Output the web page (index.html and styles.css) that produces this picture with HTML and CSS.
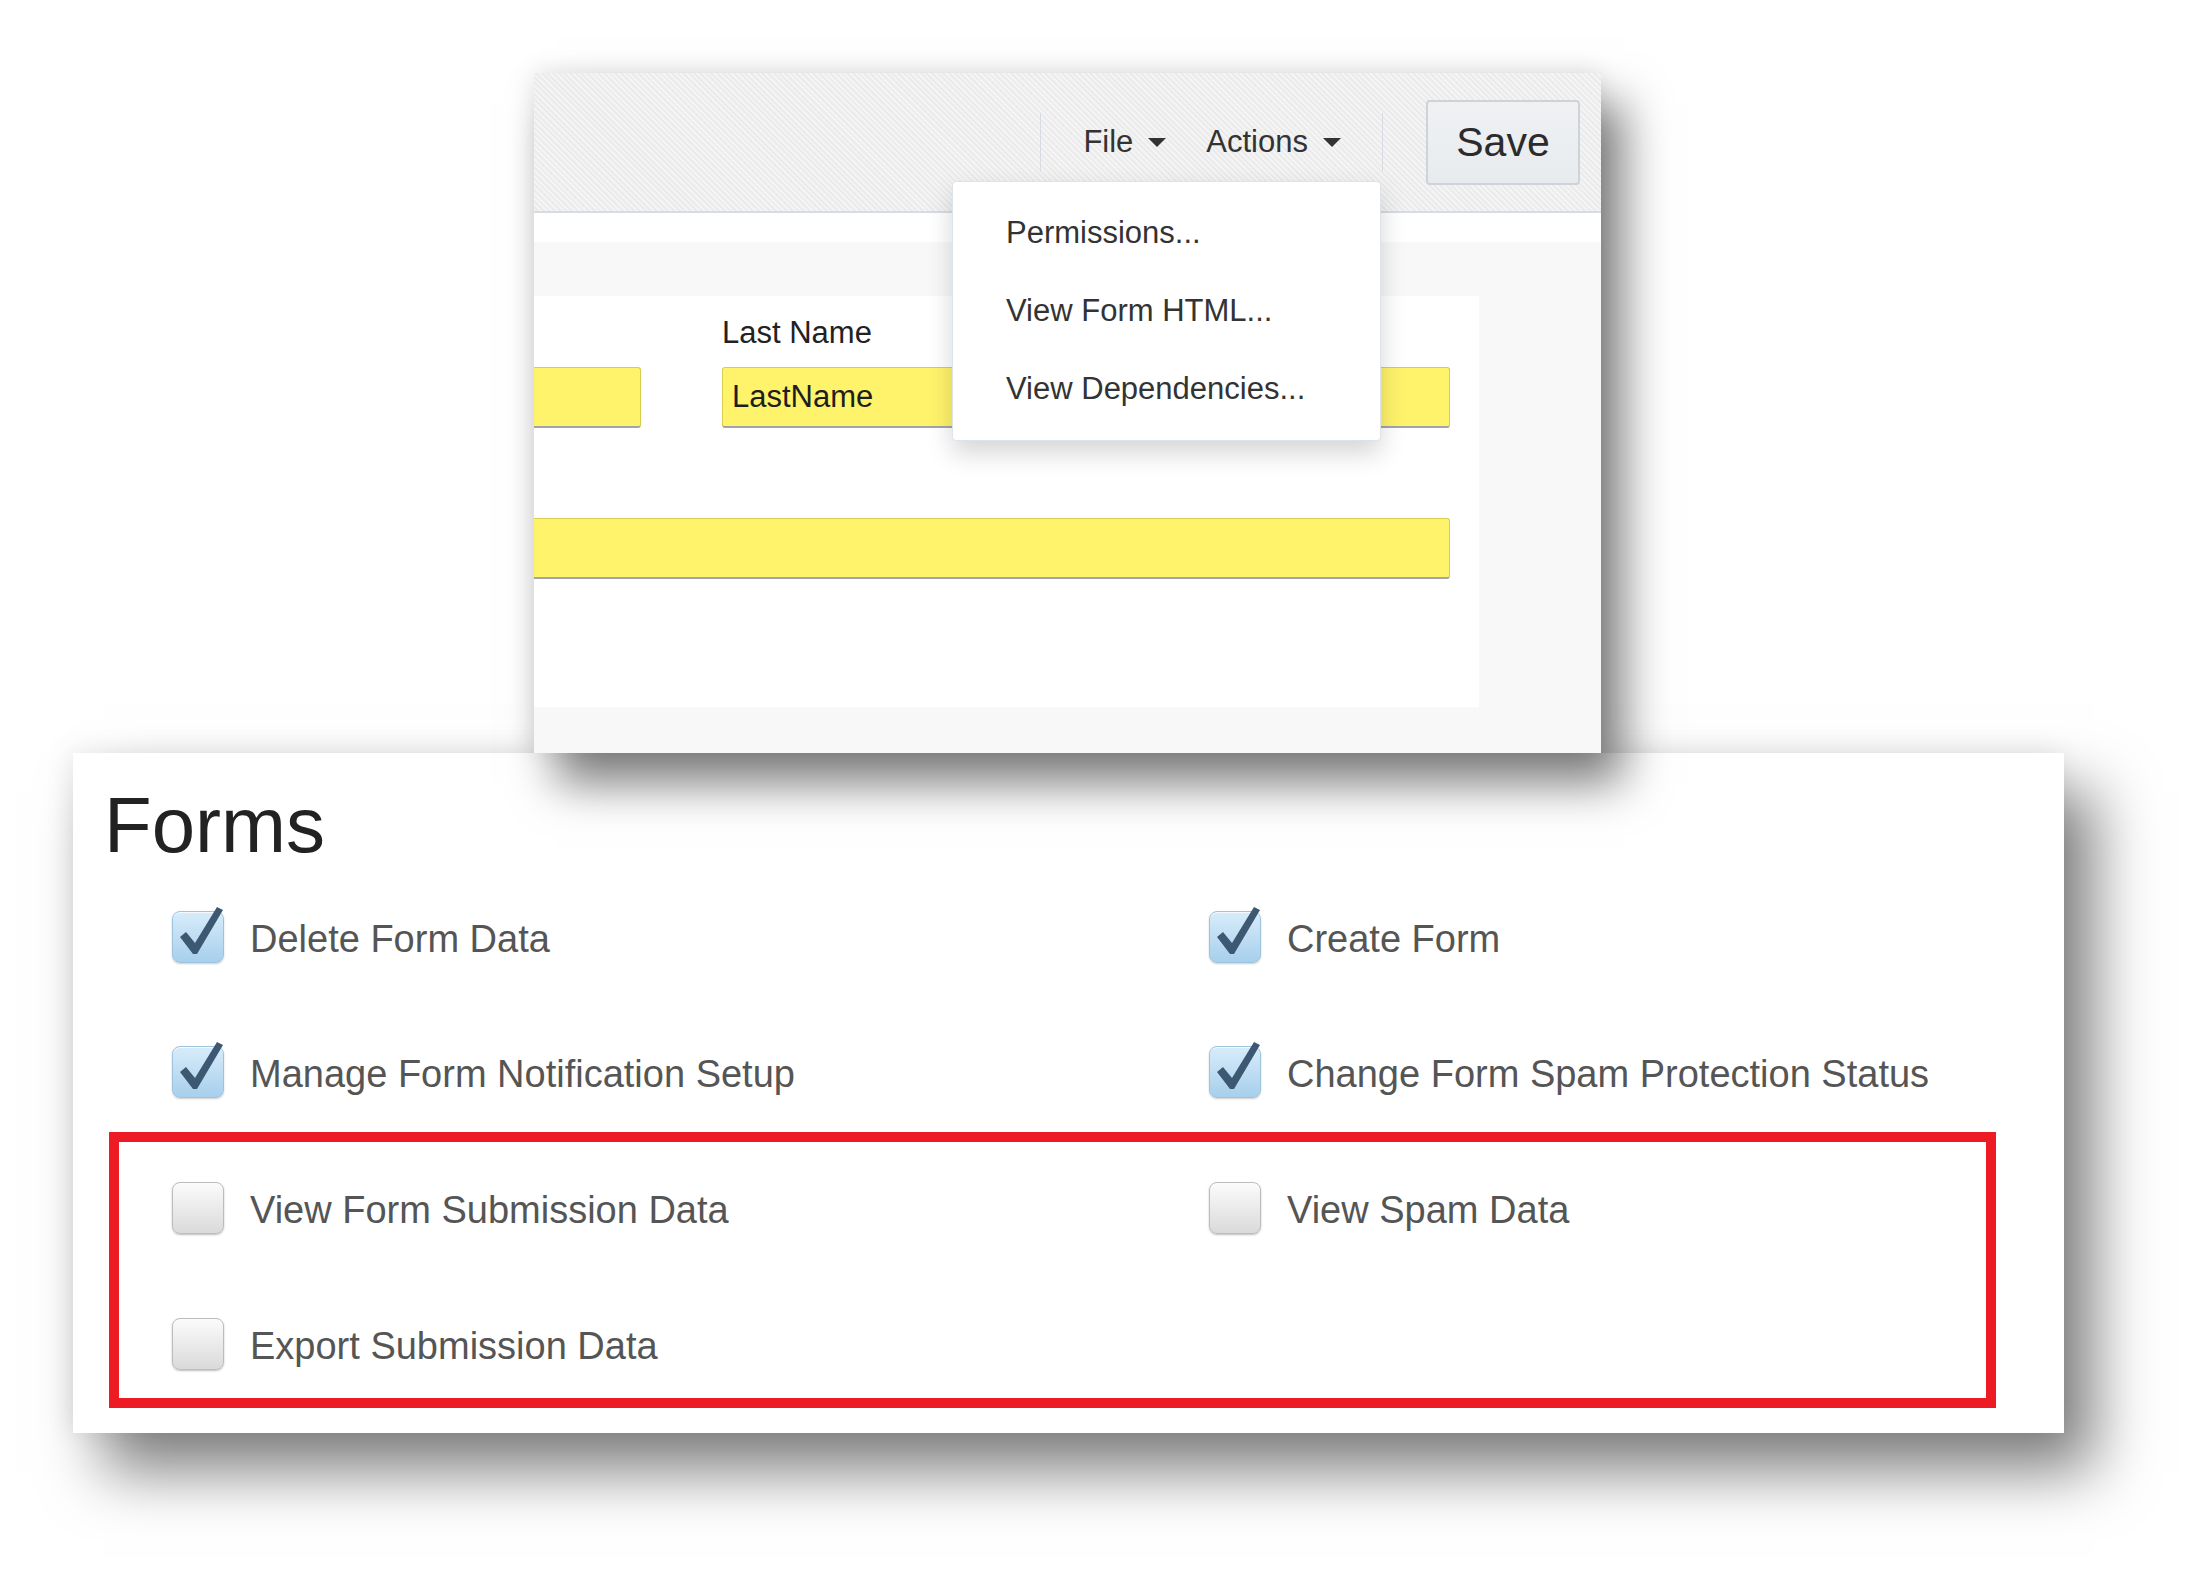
FILE: index.html
```html
<!DOCTYPE html>
<html lang="en">
<head>
<meta charset="utf-8">
<title>Forms permissions</title>
<link rel="stylesheet" href="styles.css">
</head>
<body>
<div class="stage">
  <section class="editor">
    <header class="toolbar">
      <span class="menu-sep"></span>
      <div class="menu">
        <span class="menu-item">File <i class="caret"></i></span>
        <span class="menu-item">Actions <i class="caret"></i></span>
      </div>
      <span class="menu-sep"></span>
      <button class="save-btn" type="button">Save</button>
    </header>
    <div class="strip"></div>
    <div class="canvas">
      <div class="card">
        <div class="card-inner">
          <div class="field-row">
            <div class="field-group first">
              <label class="field-label">&nbsp;</label>
              <div class="field"></div>
            </div>
            <div class="field-group second">
              <label class="field-label">Last Name</label>
              <div class="field">LastName</div>
            </div>
          </div>
          <div class="field wide"></div>
        </div>
      </div>
    </div>
    <ul class="dropdown">
      <li>Permissions...</li>
      <li>View Form HTML...</li>
      <li>View Dependencies...</li>
    </ul>
  </section>

  <section class="forms-panel">
    <h1 class="title">Forms</h1>
    <div class="perm-grid plain">
      <div class="perm">
        <span class="cb checked"><svg viewBox="0 0 52 52" width="52" height="52"><polygon points="8,26 14,21 23,32 45,-4 51,-1 25,43 21,43"/></svg></span>
        <span class="perm-label">Delete Form Data</span>
      </div>
      <div class="perm">
        <span class="cb checked"><svg viewBox="0 0 52 52" width="52" height="52"><polygon points="8,26 14,21 23,32 45,-4 51,-1 25,43 21,43"/></svg></span>
        <span class="perm-label">Create Form</span>
      </div>
      <div class="perm">
        <span class="cb checked"><svg viewBox="0 0 52 52" width="52" height="52"><polygon points="8,26 14,21 23,32 45,-4 51,-1 25,43 21,43"/></svg></span>
        <span class="perm-label">Manage Form Notification Setup</span>
      </div>
      <div class="perm">
        <span class="cb checked"><svg viewBox="0 0 52 52" width="52" height="52"><polygon points="8,26 14,21 23,32 45,-4 51,-1 25,43 21,43"/></svg></span>
        <span class="perm-label">Change Form Spam Protection Status</span>
      </div>
    </div>
    <div class="perm-grid highlight">
      <div class="perm">
        <span class="cb"></span>
        <span class="perm-label">View Form Submission Data</span>
      </div>
      <div class="perm">
        <span class="cb"></span>
        <span class="perm-label">View Spam Data</span>
      </div>
      <div class="perm">
        <span class="cb"></span>
        <span class="perm-label">Export Submission Data</span>
      </div>
    </div>
  </section>
</div>
</body>
</html>
```
FILE: styles.css
```css
* { box-sizing: border-box; }

html, body {
  margin: 0;
  padding: 0;
  background: #ffffff;
}

body {
  width: 2209px;
  height: 1576px;
  overflow: hidden;
  font-family: "Liberation Sans", Arial, Helvetica, sans-serif;
}

.stage {
  display: flex;
  flex-direction: column;
  align-items: flex-start;
  padding-top: 73px;
}

/* ---------- top editor panel ---------- */
.editor {
  position: relative;
  z-index: 2;
  margin-left: 534px;
  width: 1067px;
  height: 680px;
  display: flex;
  flex-direction: column;
  background: #f8f8f8;
  box-shadow: 22px 30px 44px rgba(0, 0, 0, 0.52), -2px -4px 22px rgba(0, 0, 0, 0.08);
}

.toolbar {
  height: 140px;
  flex: none;
  display: flex;
  align-items: center;
  justify-content: flex-end;
  padding-right: 21px;
  border-bottom: 2px solid #d5dce4;
  background:
    repeating-linear-gradient(45deg, #f4f4f4 0 2px, #ebebeb 2px 4px);
}

.menu-sep {
  width: 1px;
  height: 58px;
  background: #d6dce2;
}

.menu {
  display: flex;
  align-items: center;
  gap: 40px;
  margin: 0 41px 0 42px;
}

.menu-item {
  display: flex;
  align-items: center;
  gap: 15px;
  font-size: 31px;
  color: #333333;
}

.caret {
  width: 0;
  height: 0;
  border-left: 9px solid transparent;
  border-right: 9px solid transparent;
  border-top: 9px solid #333333;
}

.save-btn {
  margin-left: 43px;
  width: 154px;
  height: 85px;
  border: 2px solid #cdd3d9;
  border-radius: 4px;
  background: linear-gradient(#eff1f3, #e8ebee);
  font-family: inherit;
  font-size: 41px;
  color: #2b2b2b;
  padding: 0;
}

.strip {
  height: 29px;
  flex: none;
  background: #ffffff;
}

.canvas {
  flex: 1;
  padding: 54px 122px 46px 0;
  background: #f8f8f8;
}

.card {
  height: 411px;
  background: #ffffff;
  overflow: hidden;
  padding: 19px 29px 0 0;
}

.card-inner {
  margin-left: -60px;
}

.field-row {
  display: flex;
  gap: 81px;
}

.field-group.first { width: 167px; }
.field-group.second { width: 728px; }

.field-label {
  display: block;
  height: 36px;
  line-height: 36px;
  font-size: 31px;
  color: #222222;
  margin-bottom: 16px;
}

.field {
  height: 61px;
  background: #fff36b;
  border: 1px solid #d9cd4f;
  border-bottom: 2px solid #a3a3ae;
  border-radius: 3px;
  padding-left: 9px;
  font-size: 31px;
  line-height: 58px;
  color: #1e1e1e;
}

.field.wide {
  margin-top: 90px;
  width: 976px;
}

.dropdown {
  position: absolute;
  left: 418px;
  top: 108px;
  width: 429px;
  height: 260px;
  margin: 0;
  padding: 12px 0 12px 53px;
  list-style: none;
  background: #ffffff;
  border: 1px solid #dde3ea;
  border-radius: 4px;
  box-shadow: 0 12px 26px rgba(0, 0, 0, 0.17);
}

.dropdown li {
  font-size: 31px;
  line-height: 78px;
  color: #333333;
}

/* ---------- forms permissions panel ---------- */
.forms-panel {
  position: relative;
  z-index: 1;
  margin-left: 73px;
  width: 1991px;
  background: #ffffff;
  padding: 33px 68px 25px 36px;
  box-shadow: 30px 38px 58px rgba(0, 0, 0, 0.5), -4px -2px 24px rgba(0, 0, 0, 0.08);
}

.title {
  margin: 0 0 0 -5px;
  font-size: 78px;
  line-height: 78px;
  font-weight: normal;
  color: #222222;
}

.perm-grid {
  display: grid;
  grid-template-columns: 1037px 1fr;
  row-gap: 83px;
}

.perm-grid.plain {
  margin-top: 47px;
  padding-left: 63px;
}

.perm-grid.highlight {
  margin-top: 34px;
  row-gap: 84px;
  border: 10px solid #ed1c24;
  padding: 40px 0 28px 53px;
}

.perm {
  display: flex;
  align-items: center;
  gap: 26px;
  height: 52px;
}

.perm-label {
  font-size: 38px;
  line-height: 44px;
  color: #555555;
  padding-top: 4px;
  white-space: nowrap;
}

.cb {
  flex: none;
  width: 52px;
  height: 52px;
  border-radius: 8px;
  border: 1px solid #bcbcbc;
  background: linear-gradient(#fbfbfb, #dadada);
  box-shadow: 0 1px 2px rgba(0, 0, 0, 0.25);
}

.cb.checked {
  border-color: #9dc3df;
  background: linear-gradient(#d8ecfa, #a7cfec);
  box-shadow: 0 1px 2px rgba(0, 0, 0, 0.2), inset 0 1px 0 rgba(255, 255, 255, 0.7);
}

.cb svg {
  display: block;
  margin: -1px;
  overflow: visible;
}

.cb svg polygon {
  fill: #3c5873;
}
```
